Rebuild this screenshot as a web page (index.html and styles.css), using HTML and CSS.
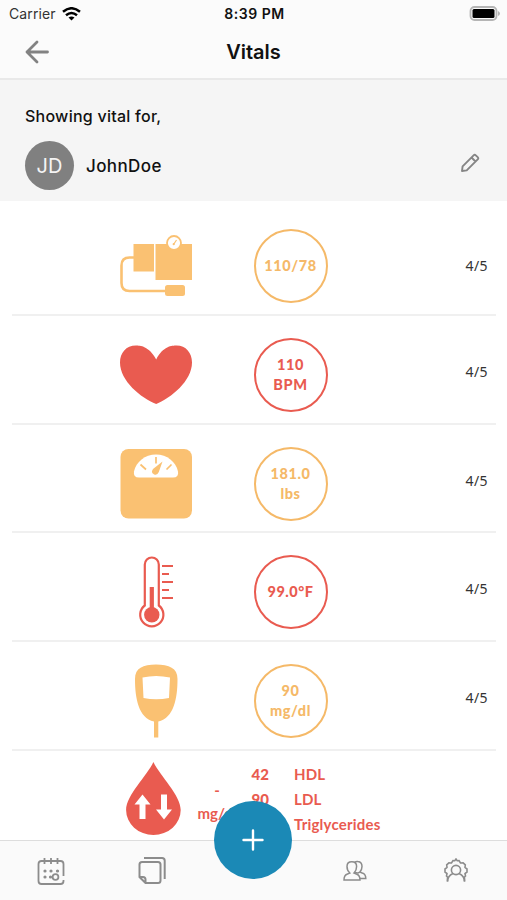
FILE: index.html
```html
<!DOCTYPE html>
<html lang="en">
<head>
	<meta charset="utf-8">
	<title>Vitals</title>
	<link rel="stylesheet" href="styles.css">
</head>
<body>
<div class="app">

	<header class="topbar">
		<div class="status">
			<div class="carrier">Carrier
				<svg width="19" height="14" viewBox="0 0 19 14" fill="none" stroke="#000" stroke-width="2.5"><path d="M1 4.8Q9.500 -2.300 18 4.800M4 8.300Q9.500 3.600 15 8.300"/><path d="M6.500 10.600Q9.500 8.200 12.500 10.600L9.500 13.600Z" fill="#000" stroke="none"/></svg>
			</div>
			<div class="clock">8:39 PM</div>
			<svg class="battery" width="31" height="15" viewBox="0 0 31 15"><rect x="1.500" y="1" width="26" height="13" rx="4" fill="#fafafa" stroke="#b5b5b5" stroke-width="1.800"/><rect x="3.500" y="3" width="22" height="9" rx="1.500" fill="#000"/><path d="M29 5v5Q31 9 31 7.500T29 5" fill="#b5b5b5"/></svg>
		</div>
		<div class="titlebar">
			<svg class="back" width="24" height="24" viewBox="0 0 24 24" fill="none" stroke="#828282" stroke-width="2.800" stroke-linecap="round" stroke-linejoin="round"><path d="M22.500 12H2M12 2L2 12l10 10"/></svg>
			<h1>Vitals</h1>
		</div>
	</header>

	<section class="patient">
		<div class="showing">Showing vital for,</div>
		<div class="person">
			<div class="avatar">JD</div>
			<div class="name">JohnDoe</div>
			<svg width="20" height="20" viewBox="0 0 20 20" fill="none" stroke="#858585" stroke-width="1.900" stroke-linejoin="round"><path d="M2 18l.6-4.700L13.600 2.300q1.100-1.100 2.200 0l1.900 1.900q1.100 1.100 0 2.200L6.700 17.400ZM11.500 4.500l4 4"/></svg>
		</div>
	</section>

	<main class="list">
		<div class="row orange first">
			<svg class="icon" viewBox="0 0 77 74">
				<path d="M15.500 15H36v27.500H15.500ZM37.500 15H74v36H37.500Z" fill="currentColor"/>
				<path d="M16 28.500h-4.500q-8 0-8 8V54q0 8 8 8H48" fill="none" stroke="currentColor" stroke-width="2.600"/>
				<rect x="47" y="56" width="20" height="11" rx="2.500" fill="currentColor"/>
				<circle cx="56" cy="14" r="7" fill="#fff" stroke="currentColor" stroke-width="1.800"/>
				<path d="M55.500 15.500l3-4.500" stroke="currentColor" stroke-width="1.200"/><circle cx="55.700" cy="15.200" r="1.100" fill="currentColor"/>
			</svg>
			<div class="ring">110/78</div>
			<div class="score">4/5</div>
		</div>

		<div class="row red">
			<svg class="icon" viewBox="0 0 77 74"><path d="M38.200 21.500C31 8 22 7.500 18 7.500C8 7.500 2 15 2 24.500C2 43 23 60 38.200 66C53 60 74 43 74 24.500C74 15 68 7.500 58.500 7.500C54 7.500 45 8 38.200 21.500Z" fill="currentColor"/></svg>
			<div class="ring">110<br>BPM</div>
			<div class="score">4/5</div>
		</div>

		<div class="row orange">
			<svg class="icon" viewBox="0 0 77 74">
				<rect x="2.500" y="2" width="71.500" height="69.500" rx="8" fill="currentColor"/>
				<path d="M21 30.500q-6 0-5-6C18 15 27 7.500 38 7.500S58 15 60 24.500q1 6-5 6Z" fill="#fff"/>
				<path d="M22.500 17.500l5.500 5M38 10v6.500M53.500 17.500l-5 5" stroke="currentColor" stroke-width="1.700"/>
				<path d="M44.500 14.500L40.800 25q-1.700 4-5 2.300t-.8-5.300Z" fill="currentColor"/>
			</svg>
			<div class="ring">181.0<br>lbs</div>
			<div class="score">4/5</div>
		</div>

		<div class="row red">
			<svg class="icon" viewBox="0 0 77 74" fill="none" stroke="currentColor">
				<path d="M26.800 50.500V9.500a7 7 0 0 1 14 0v41a11.600 11.600 0 1 1-14 0Z" stroke-width="2.200"/>
				<path d="M33.800 32v28" stroke-width="4.200"/>
				<circle cx="33.800" cy="59.700" r="7.700" fill="currentColor" stroke="none"/>
				<path d="M44 11h11M44 19h7M44 27h11M44 35h7M44 43h11" stroke-width="2"/>
			</svg>
			<div class="ring temp">99.0°F</div>
			<div class="score">4/5</div>
		</div>

		<div class="row orange">
			<svg class="icon" viewBox="0 0 77 74">
				<path fill-rule="evenodd" fill="currentColor" d="M38 .5C51 .5 59.500 4 59.500 15C59.500 34 56 54 40.300 57.500V73.500H36V57.500C20.500 54 17 34 17 15C17 4 25 .5 38 .5ZM24.500 13.500L25.500 34Q38 36.500 51 34L52 13.500Q38 10.500 24.500 13.500Z"/>
			</svg>
			<div class="ring">90<br>mg/dl</div>
			<div class="score">4/5</div>
		</div>

		<div class="row red cholesterol">
			<svg class="icon" viewBox="0 0 77 74">
				<path d="M35.400 0C42 14 62.700 33 62.700 48A27.300 25 0 0 1 8.100 48C8.100 33 29 14 35.400 0Z" fill="currentColor"/>
				<path d="M24.500 32.500l8 10h-5V57h-6V42.500h-5ZM46 57.500l8-10h-5V32.500h-6v15h-5Z" fill="#fff"/>
			</svg>
			<div class="total">-<br>mg/dl</div>
			<div class="values">42<br>90</div>
			<div class="labels">HDL<br>LDL<br>Triglycerides</div>
		</div>
	</main>

	<nav class="tabs">
		<svg width="28" height="28" viewBox="0 0 28 28" fill="none" stroke="#8c8c8c" stroke-width="1.800">
			<path d="M26.500 19V7q0-3-3-3h-19q-3 0-3 3v17q0 3 3 3h19q3 0 3-3v-1M7.500 1v6M14 1v6M20.500 1v6"/>
			<circle cx="18.500" cy="20" r="2.900"/>
			<path d="M8 14h.01M14 14h.01M20.500 14h.01M8 20h.01M13.500 20h.01" stroke-width="3.200" stroke-linecap="round"/>
		</svg>
		<svg width="28" height="28" viewBox="0 0 28 28" fill="none" stroke="#8c8c8c" stroke-width="2">
			<path d="M4 5h16q2.500 0 2.500 2.500v16q0 2.500-2.500 2.500H7.500L1.500 20V7.500Q1.500 5 4 5ZM1.500 20h3.500q2.500 0 2.500 2.500V26M6 1h18q2.700 0 2.700 2.700V22"/>
		</svg>
		<button class="add">
			<svg width="22" height="22" viewBox="0 0 22 22" stroke="#fff" stroke-width="2.400" stroke-linecap="round"><path d="M11 1.500v19M1.500 11h19"/></svg>
		</button>
		<svg width="24" height="22" viewBox="0 0 24 22" fill="none" stroke="#8c8c8c" stroke-width="1.500">
			<path d="M1 20q0-5 3.500-6l2.300-1Q4 10.500 4 6.500Q4 1.800 8.800 1.800T13.600 6.500Q13.600 10.500 11 13l2.300 1q3.700 1 3.700 6Z"/>
			<path d="M11.500 2.500Q13 1.200 15 1.500Q19 2 19 6.500Q19 10 16.800 12l2.400 1q3.600 1 3.600 5.500H17M12 12q2.500 2 4.800 0"/>
		</svg>
		<svg width="24" height="25" viewBox="0 0 24 25" fill="none" stroke="#8c8c8c" stroke-width="1.600">
			<path d="M3.500 23.500V19l-1-1 .5-2.500L1 14v-3l2-1.500-.3-2.700 2.200-2 2.600.2L9 2.500l1.800.2L12 1l1.200 1.700 1.800-.2L16.500 5l2.600-.2 2.200 2-.3 2.700 2 1.500v3l-2 1.500.5 2.500-1 1v4.500"/>
			<circle cx="12" cy="12" r="4.600"/>
			<path d="M3.500 23.500q0-5.500 5.500-8M20.500 23.500q0-5.500-5.500-8"/>
		</svg>
	</nav>

</div>
</body>
</html>
```
FILE: styles.css
```css
* {
	box-sizing: border-box;
}

body {
	margin: 0;
	background: #fff;
	color: #111;
	font-family: Inter, "Liberation Sans", sans-serif;
}

.app {
	display: flex;
	flex-direction: column;
	height: 900px;
	overflow: hidden;
}

.topbar {
	flex: none;
	height: 80px;
	background: #fbfbfb;
	border-bottom: 2px solid #e9e9e9;
}

.status {
	display: grid;
	grid-template-columns: 1fr auto 1fr;
	align-items: center;
	height: 27px;
	padding: 0 7px 0 9px;
}

.carrier {
	display: flex;
	align-items: center;
	gap: 6px;
	color: #333;
	font-size: 14px;
	letter-spacing: 0.1px;
}

.clock {
	font-size: 14px;
	font-weight: 600;
	letter-spacing: 0.5px;
}

.battery {
	justify-self: end;
}

.titlebar {
	display: grid;
	grid-template-columns: 1fr auto 1fr;
	align-items: center;
	height: 50px;
	padding: 0 25px;
}

.titlebar h1 {
	margin: 0;
	font-size: 20px;
	font-weight: 600;
	letter-spacing: 0;
}

.patient {
	flex: none;
	height: 121px;
	padding: 25px 27px 0 25px;
	background: #f5f5f5;
}

.showing {
	font-size: 16px;
	font-weight: 500;
	line-height: 22px;
	letter-spacing: 0.25px;
}

.person {
	display: flex;
	align-items: center;
	margin-top: 14px;
}

.avatar {
	width: 49px;
	height: 49px;
	margin-right: 12px;
	border-radius: 50%;
	background: #808080;
	color: #f4f4f4;
	font-size: 20px;
	line-height: 50px;
	text-align: center;
}

.name {
	flex: 1;
	font-size: 17px;
	font-weight: 500;
	letter-spacing: 0.4px;
}

.person svg {
	margin-bottom: 5px;
}

.list {
	flex: 1;
	min-height: 0;
	padding: 6px 11px 0 12px;
	overflow: hidden;
}

.row {
	display: grid;
	grid-template-columns: 77px 74px 1fr;
	column-gap: 58.5px;
	height: 108.75px;
	padding: 22px 8px 0 106px;
	border-bottom: 2px solid #f0f0f0;
}

.orange {
	color: #fac172;
}

.red {
	color: #e95b50;
}

.icon {
	width: 77px;
	height: 74px;
}

.ring {
	display: flex;
	align-items: center;
	justify-content: center;
	width: 74px;
	height: 74px;
	border: 2px solid;
	border-radius: 50%;
	font-family: Lato, sans-serif;
	font-size: 14.5px;
	font-weight: 900;
	line-height: 20px;
	letter-spacing: 0.6px;
	text-align: center;
}

.orange .ring {
	color: #f5b968;
}

.ring.temp {
	letter-spacing: 0.5px;
}

.score {
	padding-top: 24px;
	color: #333;
	font-family: "Noto Sans", sans-serif;
	font-size: 14px;
	line-height: 20px;
	letter-spacing: 0.4px;
	text-align: right;
}

.first .score {
	padding-top: 27px;
}

.cholesterol {
	grid-template-columns: 77px 44px 30px 1fr;
	column-gap: 0;
	padding-top: 11px;
	border-bottom: 0;
	font-family: Lato, sans-serif;
	font-size: 15px;
	font-weight: 700;
}

.total {
	padding-top: 17px;
	line-height: 23px;
	text-align: center;
}

.values {
	line-height: 25px;
	font-weight: 900;
	text-align: right;
}

.labels {
	padding-left: 25px;
	line-height: 25px;
	letter-spacing: 0.2px;
}

.tabs {
	display: grid;
	flex: none;
	grid-template-columns: repeat(5, 1fr);
	align-items: center;
	justify-items: center;
	height: 60px;
	border-top: 1px solid #ddd;
	background: #fafafa;
}

.add {
	display: flex;
	align-items: center;
	justify-content: center;
	width: 78px;
	height: 78px;
	margin-top: -61px;
	padding: 0;
	border: 0;
	border-radius: 50%;
	background: #1b89b6;
}
```
